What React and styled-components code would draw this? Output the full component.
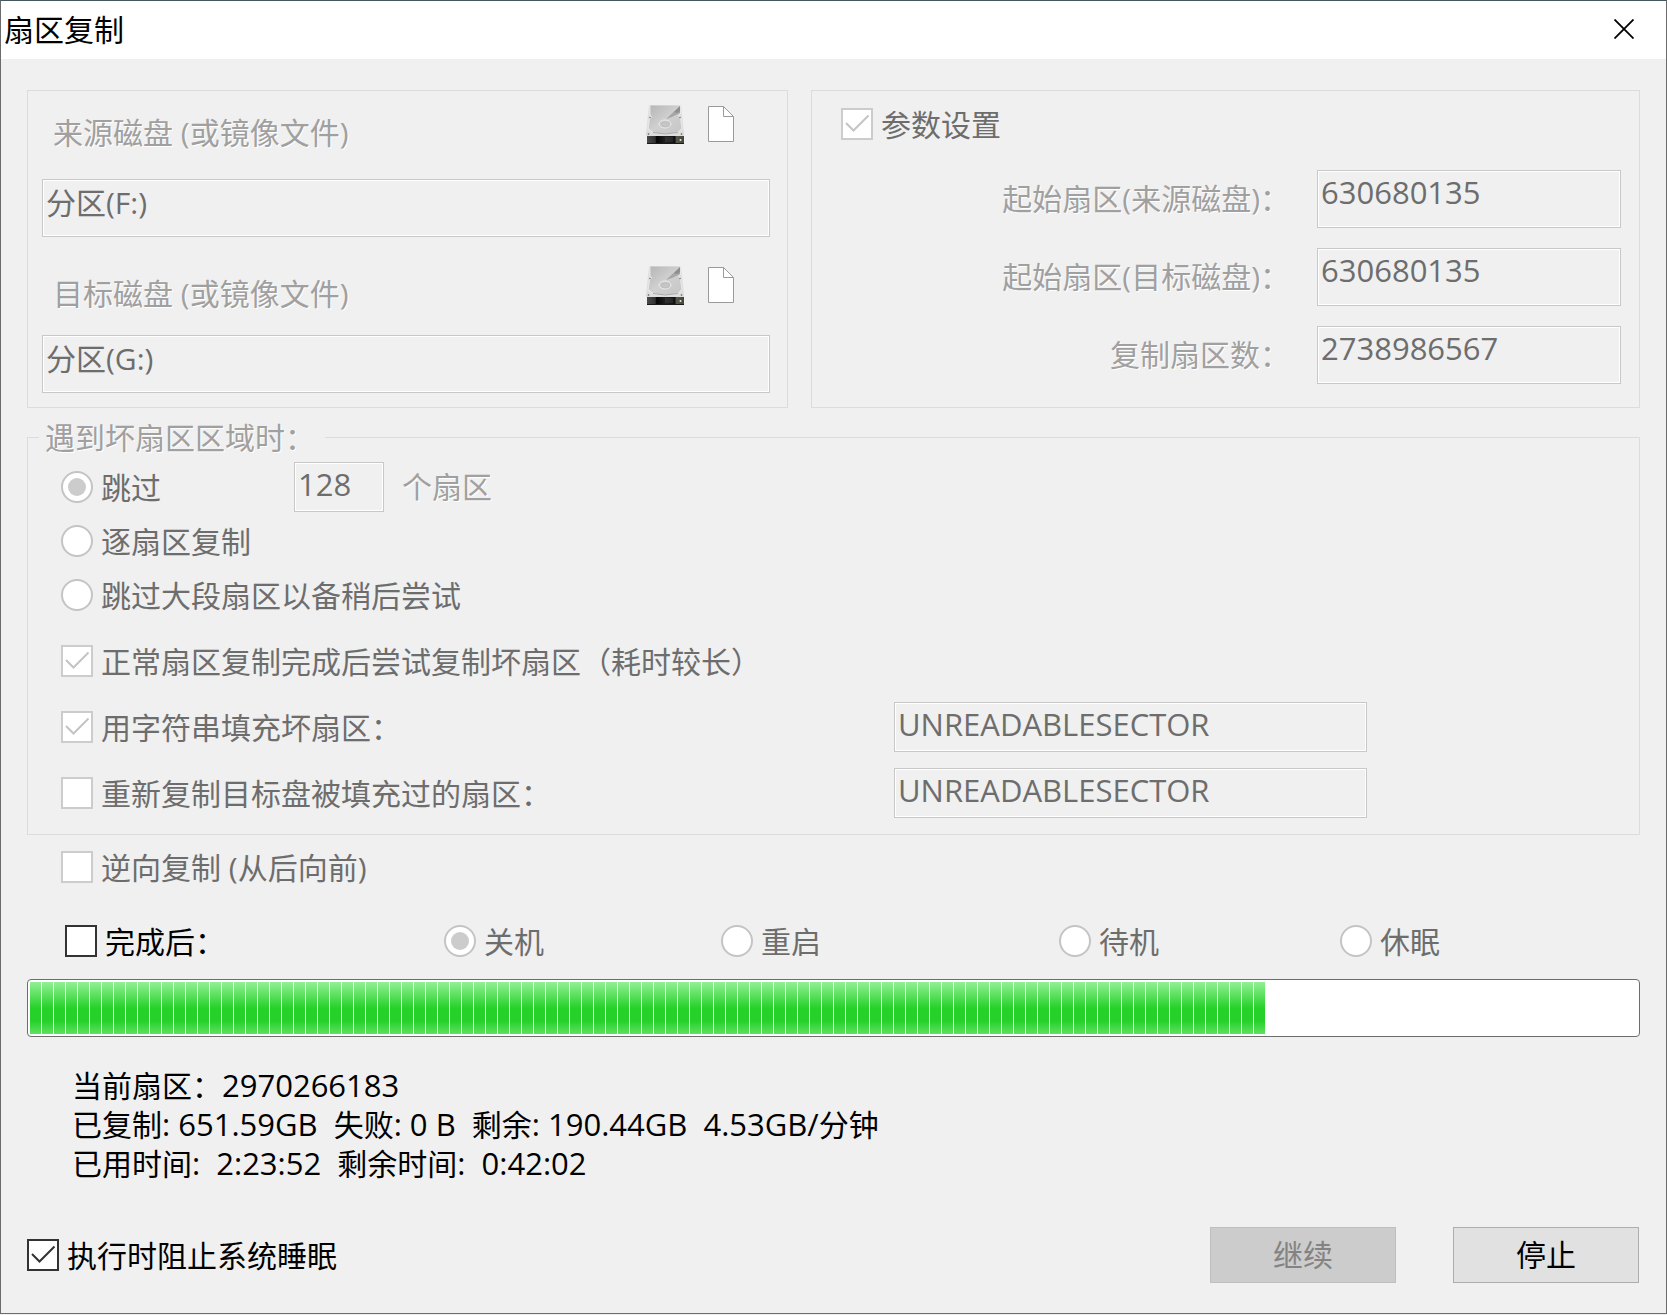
import React from "react";
import styled, { createGlobalStyle, css } from "styled-components";

const copied = 651.59;
const remaining = 190.44;

const HardDiskIcon = () => (
  <svg width="38" height="40" viewBox="0 0 38 40" aria-hidden="true">
    <defs>
      <linearGradient id="plate" x1="0" y1="0" x2="1" y2="1">
        <stop offset="0" stopColor="#b4b4b4" />
        <stop offset="0.5" stopColor="#d0d0d0" />
        <stop offset="1" stopColor="#c6c6c6" />
      </linearGradient>
      <linearGradient id="front" x1="0" y1="0" x2="1" y2="0">
        <stop offset="0" stopColor="#4a4a4a" />
        <stop offset="0.22" stopColor="#333" />
        <stop offset="0.26" stopColor="#050505" />
        <stop offset="0.5" stopColor="#222" />
        <stop offset="0.75" stopColor="#111" />
        <stop offset="0.8" stopColor="#55584a" />
        <stop offset="1" stopColor="#44463e" />
      </linearGradient>
    </defs>
    <path d="M3 0H35L38 28V31H0V28Z" fill="#dedede" />
    <path
      d="M4 0H34L34.500 9Q31 10 34.500 13L36 24Q34 24 33 27Q19 31 6 27Q4 24 2 24L3.500 14Q7 12 4 10Z"
      fill="url(#plate)"
      stroke="#efefef"
      strokeWidth="0.800"
    />
    <path d="M34 1L20 14L26 12L34 8Z" fill="#a6a6a6" />
    <path d="M34 1L28 7L31 8L34 6Z" fill="#8f8f8f" />
    <ellipse cx="19" cy="19" rx="6" ry="4" fill="#cbcbcb" stroke="#ececec" strokeWidth="1" />
    <ellipse cx="19.500" cy="19.500" rx="4" ry="2.500" fill="#c6c6c6" stroke="#b4b4b4" strokeWidth="0.500" />
    <path d="M7 27.500Q19 30.500 32 27.500" fill="none" stroke="#8f8f8f" strokeWidth="0.700" />
    <circle cx="4" cy="12.500" r="0.800" fill="#777" />
    <circle cx="34" cy="12.500" r="0.800" fill="#777" />
    <circle cx="2.500" cy="29" r="0.800" fill="#555" />
    <circle cx="35.500" cy="29" r="0.800" fill="#555" />
    <rect x="1" y="31" width="37" height="8" fill="url(#front)" />
    <path d="M20 32V37M22 32V37M24 32V37M26 32V37" stroke="#555" strokeWidth="0.600" />
    <path d="M1 38.500H38" stroke="#1a1a1a" />
    <circle cx="34.500" cy="35" r="1" fill="#e4ecd0" />
  </svg>
);

const FileIcon = () => (
  <svg width="27" height="37" viewBox="0 0 27 37" aria-hidden="true">
    <path d="M0.500 1.500H15.500L25.500 11.500V36.500H0.500Z" fill="#fff" stroke="#9a9a9a" />
    <path d="M15.500 1.500V11.500H25.500" fill="none" stroke="#9a9a9a" />
  </svg>
);

const CheckOption = ({ id, label, strong, ...rest }) => (
  <Option $strong={strong} htmlFor={id}>
    <Tick>
      <CheckBox id={id} type="checkbox" $strong={strong} disabled={!strong} {...rest} />
      <svg width="32" height="32" viewBox="0 0 32 32" aria-hidden="true">
        <path d="M5 15L12.500 22.500L27.500 7.500" />
      </svg>
    </Tick>
    <OptionText>{label}</OptionText>
  </Option>
);

const RadioOption = ({ id, label, ...rest }) => (
  <Option htmlFor={id}>
    <Radio id={id} type="radio" disabled {...rest} />
    <OptionText>{label}</OptionText>
  </Option>
);

const DiskField = ({ id, label, value, gap }) => (
  <Disk $gap={gap}>
    <DiskHead>
      <EtchedLabel htmlFor={id}>{label}</EtchedLabel>
      <DiskButtons>
        <IconButton type="button" disabled aria-label="选择磁盘">
          <HardDiskIcon />
        </IconButton>
        <IconButton type="button" disabled aria-label="选择镜像文件">
          <FileIcon />
        </IconButton>
      </DiskButtons>
    </DiskHead>
    <DiskName id={id} type="text" defaultValue={value} disabled />
  </Disk>
);

const App = () => {
  const percent = (copied / (copied + remaining)) * 100;
  return (
    <Window>
      <GlobalStyle />
      <TitleBar>
        <Title>扇区复制</Title>
        <CloseButton type="button" aria-label="关闭">
          <svg width="20" height="20" viewBox="0 0 20 20" aria-hidden="true">
            <path d="M0.500 0.500L19.500 19.500M19.500 0.500L0.500 19.500" stroke="#000" strokeWidth="1.800" />
          </svg>
        </CloseButton>
      </TitleBar>
      <Content>
        <TopPanels>
          <DiskPanel>
            <DiskField id="source" label="来源磁盘 (或镜像文件)" value="分区(F:)" gap={19} />
            <DiskField id="target" label="目标磁盘 (或镜像文件)" value="分区(G:)" gap={14} />
          </DiskPanel>
          <ParamPanel>
            <CheckOption id="params" label="参数设置" defaultChecked />
            <ParamGrid>
              <EtchedLabel htmlFor="from">起始扇区(来源磁盘)：</EtchedLabel>
              <TextBox id="from" type="text" defaultValue="630680135" disabled />
              <EtchedLabel htmlFor="to">起始扇区(目标磁盘)：</EtchedLabel>
              <TextBox id="to" type="text" defaultValue="630680135" disabled />
              <EtchedLabel htmlFor="count">复制扇区数：</EtchedLabel>
              <TextBox id="count" type="text" defaultValue="2738986567" disabled />
            </ParamGrid>
          </ParamPanel>
        </TopPanels>

        <BadSectors>
          <Legend>遇到坏扇区区域时：</Legend>
          <RadioRow>
            <SkipOption>
              <RadioOption id="skip" name="mode" label="跳过" defaultChecked />
            </SkipOption>
            <SkipCount id="skipCount" type="text" defaultValue="128" disabled />
            <EtchedLabel htmlFor="skipCount">个扇区</EtchedLabel>
          </RadioRow>
          <RadioRow>
            <RadioOption id="each" name="mode" label="逐扇区复制" />
          </RadioRow>
          <RadioRow>
            <RadioOption id="large" name="mode" label="跳过大段扇区以备稍后尝试" />
          </RadioRow>
          <CheckRows>
            <CheckRow>
              <CheckOption id="retry" label="正常扇区复制完成后尝试复制坏扇区（耗时较长）" defaultChecked />
            </CheckRow>
            <CheckRow>
              <CheckOption id="fill" label="用字符串填充坏扇区：" defaultChecked />
              <TextBox $small type="text" aria-label="填充字符串" defaultValue="UNREADABLESECTOR" disabled />
            </CheckRow>
            <CheckRow>
              <CheckOption id="refill" label="重新复制目标盘被填充过的扇区：" />
              <TextBox $small type="text" aria-label="已填充字符串" defaultValue="UNREADABLESECTOR" disabled />
            </CheckRow>
          </CheckRows>
        </BadSectors>

        <Reverse>
          <CheckOption id="reverse" label="逆向复制 (从后向前)" />
        </Reverse>

        <AfterDone>
          <CheckOption id="after" label="完成后：" strong />
          <RadioOption id="shutdown" name="after" label="关机" defaultChecked />
          <RadioOption id="restart" name="after" label="重启" />
          <RadioOption id="standby" name="after" label="待机" />
          <RadioOption id="hibernate" name="after" label="休眠" />
        </AfterDone>

        <ProgressBar role="progressbar" aria-label="复制进度" aria-valuenow={Math.round(percent)}>
          <Chunks style={{ width: `round(down, ${percent}%, 12px)` }} />
        </ProgressBar>

        <Status>
          <StatusLine>
            当前扇区：<Figure>2970266183</Figure>
          </StatusLine>
          <StatusLine>
            已复制<Figure>: {copied}GB{"  "}</Figure>失败<Figure>: 0 B{"  "}</Figure>
            剩余<Figure>: {remaining}GB{"  "}4.53GB/</Figure>分钟
          </StatusLine>
          <StatusLine>
            已用时间<Figure>:{"  "}2:23:52{"  "}</Figure>剩余时间<Figure>:{"  "}0:42:02</Figure>
          </StatusLine>
        </Status>

        <Footer>
          <CheckOption id="awake" label="执行时阻止系统睡眠" strong defaultChecked />
          <Actions>
            <Button type="button" disabled>
              继续
            </Button>
            <Button type="button">停止</Button>
          </Actions>
        </Footer>
      </Content>
    </Window>
  );
};

const GlobalStyle = createGlobalStyle`
  * {
    box-sizing: border-box;
  }

  body {
    margin: 0;
    background: #f0f0f0;
    color: #000;
    font: 30px/40px "Open Sans", "Noto Sans CJK SC", sans-serif;
  }

  input,
  button {
    margin: 0;
    font: inherit;
  }
`;

const Window = styled.main`
  border: 1px solid #6b6b6b;
  border-top-color: #45565f;
  background: #f0f0f0;
`;

const TitleBar = styled.header`
  display: flex;
  align-items: center;
  justify-content: space-between;
  height: 58px;
  padding: 0 32px 0 3px;
  background: #fff;
`;

const Title = styled.h1`
  margin: 0;
  font-size: 30px;
  font-weight: 400;
`;

const CloseButton = styled.button`
  display: flex;
  padding: 0 0 2px;
  border: 0;
  background: none;
`;

const Content = styled.div`
  display: flex;
  flex-direction: column;
  padding: 31px 26px 30px;
`;

const TopPanels = styled.div`
  display: grid;
  grid-template-columns: 761fr 829fr;
  gap: 23px;
`;

const panel = css`
  border: 1px solid #dcdcdc;
`;

const DiskPanel = styled.section`
  ${panel}
  display: flex;
  flex-direction: column;
  gap: 26px;
  padding: 11px 17px 14px 14px;
`;

const Disk = styled.div`
  display: flex;
  flex-direction: column;
  gap: ${(props) => props.$gap}px;
`;

const DiskHead = styled.div`
  display: flex;
  align-items: flex-start;
  justify-content: space-between;
  height: 58px;
  padding: 0 35px 0 11px;
`;

const DiskButtons = styled.div`
  display: flex;
  gap: 24px;
  padding-top: 3px;
`;

const IconButton = styled.button`
  display: flex;
  padding: 0;
  border: 0;
  background: none;
`;

const EtchedLabel = styled.label`
  color: #a0a0a0;
  text-shadow: 1px 1px 0 #fff;

  ${DiskHead} & {
    padding-top: 11px;
  }
`;

const TextBox = styled.input`
  width: 100%;
  height: ${(props) => (props.$small ? 50 : 58)}px;
  padding: 0 4px ${(props) => (props.$small ? 6 : 14)}px 3px;
  border: 1px solid #c8c8c8;
  border-radius: 0;
  background: #f0f0f0;
  box-shadow: inset 0 0 0 1px #fff;
  color: #6d6d6d;
  font-size: 31px;
`;

const DiskName = styled(TextBox)`
  font-size: 30px;
`;

const SkipCount = styled(TextBox).attrs({ $small: true })`
  width: 90px;
  margin-right: 18px;
`;

const ParamPanel = styled.section`
  ${panel}
  padding: 12px 18px 20px 29px;
`;

const ParamGrid = styled.div`
  display: grid;
  grid-template-columns: 1fr 304px;
  gap: 20px 27px;
  align-items: center;
  padding-top: 25px;

  ${EtchedLabel} {
    text-align: right;
  }
`;

const Option = styled.label`
  display: flex;
  align-items: center;
  gap: 8px;
  color: ${(props) => (props.$strong ? "#000" : "#6d6d6d")};
`;

const OptionText = styled.span`
  padding-top: 2px;
`;

const Tick = styled.span`
  display: grid;

  > * {
    grid-area: 1 / 1;
  }

  svg {
    visibility: hidden;
    fill: none;
    stroke: #c4c4c4;
    stroke-width: 2;
    pointer-events: none;
  }

  input:checked + svg {
    visibility: visible;
  }

  input:enabled + svg {
    stroke: #333;
  }
`;

const CheckBox = styled.input`
  appearance: none;
  width: 32px;
  height: 32px;
  border: 2px solid ${(props) => (props.$strong ? "#333" : "#ccc")};
  background: #fff;
`;

const Radio = styled.input`
  appearance: none;
  display: grid;
  place-content: center;
  width: 32px;
  height: 32px;
  border: 2px solid #c4c4c4;
  border-radius: 50%;
  background: #fff;

  &:checked::before {
    content: "";
    width: 18px;
    height: 18px;
    border-radius: 50%;
    background: #ccc;
  }
`;

const BadSectors = styled.fieldset`
  ${panel}
  min-width: 0;
  margin: 8px 0 0;
  padding: 2px 0 8px 33px;
`;

const Legend = styled.legend`
  margin-left: -22px;
  padding: 2px 10px 0 6px;
  color: #a0a0a0;
  text-shadow: 1px 1px 0 #fff;
`;

const RadioRow = styled.div`
  display: flex;
  align-items: center;
  height: 54px;
`;

const SkipOption = styled.div`
  width: 233px;
`;

const CheckRows = styled.div`
  padding-top: 6px;
`;

const CheckRow = styled.div`
  display: grid;
  grid-template-columns: 833fr 473fr 272fr;
  align-items: center;
  height: 66px;
`;

const Reverse = styled.div`
  padding: 11px 34px 0;
`;

const AfterDone = styled.div`
  display: grid;
  grid-template-columns: 379fr 277fr 338fr 281fr 300fr;
  padding: 32px 0 17px 38px;
`;

const ProgressBar = styled.div`
  height: 58px;
  padding: 2px;
  border: 1px solid #6d6d6d;
  border-radius: 4px;
  background: #fff;
`;

const Chunks = styled.div`
  height: 100%;
  background: repeating-linear-gradient(to right, transparent 0 11px, #f4fff4 11px 12px),
    linear-gradient(#93ef95, #26d22a 50%, #26d22a 75%, #5fe062);
`;

const Status = styled.div`
  padding: 29px 45px 0;
`;

const StatusLine = styled.p`
  margin: 0;
  line-height: 39px;
  white-space: pre-wrap;
`;

const Figure = styled.span`
  font-size: 31px;
  line-height: 1;
`;

const Footer = styled.footer`
  display: flex;
  align-items: center;
  justify-content: space-between;
  padding-top: 44px;
`;

const Actions = styled.div`
  display: flex;
  gap: 57px;
  padding-right: 1px;
`;

const Button = styled.button`
  width: 186px;
  height: 56px;
  padding: 0;
  border: 1px solid #adadad;
  background: #e1e1e1;
  color: #000;

  &:disabled {
    border-color: #bfbfbf;
    background: #ccc;
    color: #838383;
  }
`;

export default App;
